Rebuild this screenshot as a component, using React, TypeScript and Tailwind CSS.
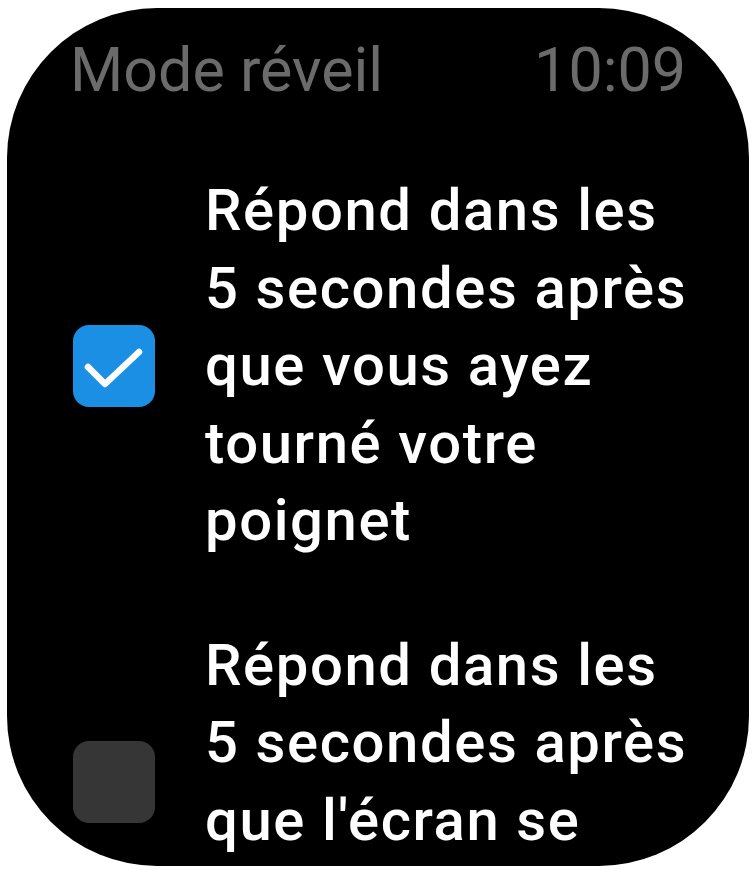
import React from "react";

const items = [
  {
    checked: true,
    lines: ["Répond dans les", "5 secondes après", "que vous ayez", "tourné votre", "poignet"],
  },
  {
    checked: false,
    lines: ["Répond dans les", "5 secondes après", "que l'écran se", "soit allumé"],
  },
];

function Checkbox({ checked }: { checked: boolean }) {
  if (!checked) {
    return <div className="h-[82px] w-[82px] shrink-0 rounded-[16px] bg-[#363636]" />;
  }
  return (
    <div className="h-[82px] w-[82px] shrink-0 rounded-[16px] bg-[#1b8fe3]">
      <svg viewBox="0 0 82 82" width="82" height="82">
        <path
          d="M15 42 L32 59 L66 27"
          fill="none"
          stroke="#ffffff"
          strokeWidth="6.5"
          strokeLinecap="round"
          strokeLinejoin="round"
        />
      </svg>
    </div>
  );
}

export default function App() {
  return (
    <div className="h-[870px] w-[756px] bg-white pl-[7px] pt-[8px]" style={{ fontFamily: "Roboto, 'Liberation Sans', sans-serif" }}>
      <div className="h-[858px] w-[742px] overflow-hidden rounded-[150px] bg-black">
        <div className="flex justify-between px-[63px] pt-[32px] text-[61px] leading-[60px] text-[#6b6b6b]">
          <span>Mode réveil</span>
          <span>10:09</span>
        </div>

        <div className="mt-[72px] flex flex-col gap-[67px] pl-[66px]">
          {items.map((item, i) => (
            <div key={i} className="flex items-center gap-[50px]">
              <Checkbox checked={item.checked} />
              <div className="text-[58px] font-medium leading-[77.5px] tracking-[1.6px] text-white">
                {item.lines.map((l, j) => (
                  <div key={j} className="whitespace-nowrap">
                    {l}
                  </div>
                ))}
              </div>
            </div>
          ))}
        </div>
      </div>
    </div>
  );
}
